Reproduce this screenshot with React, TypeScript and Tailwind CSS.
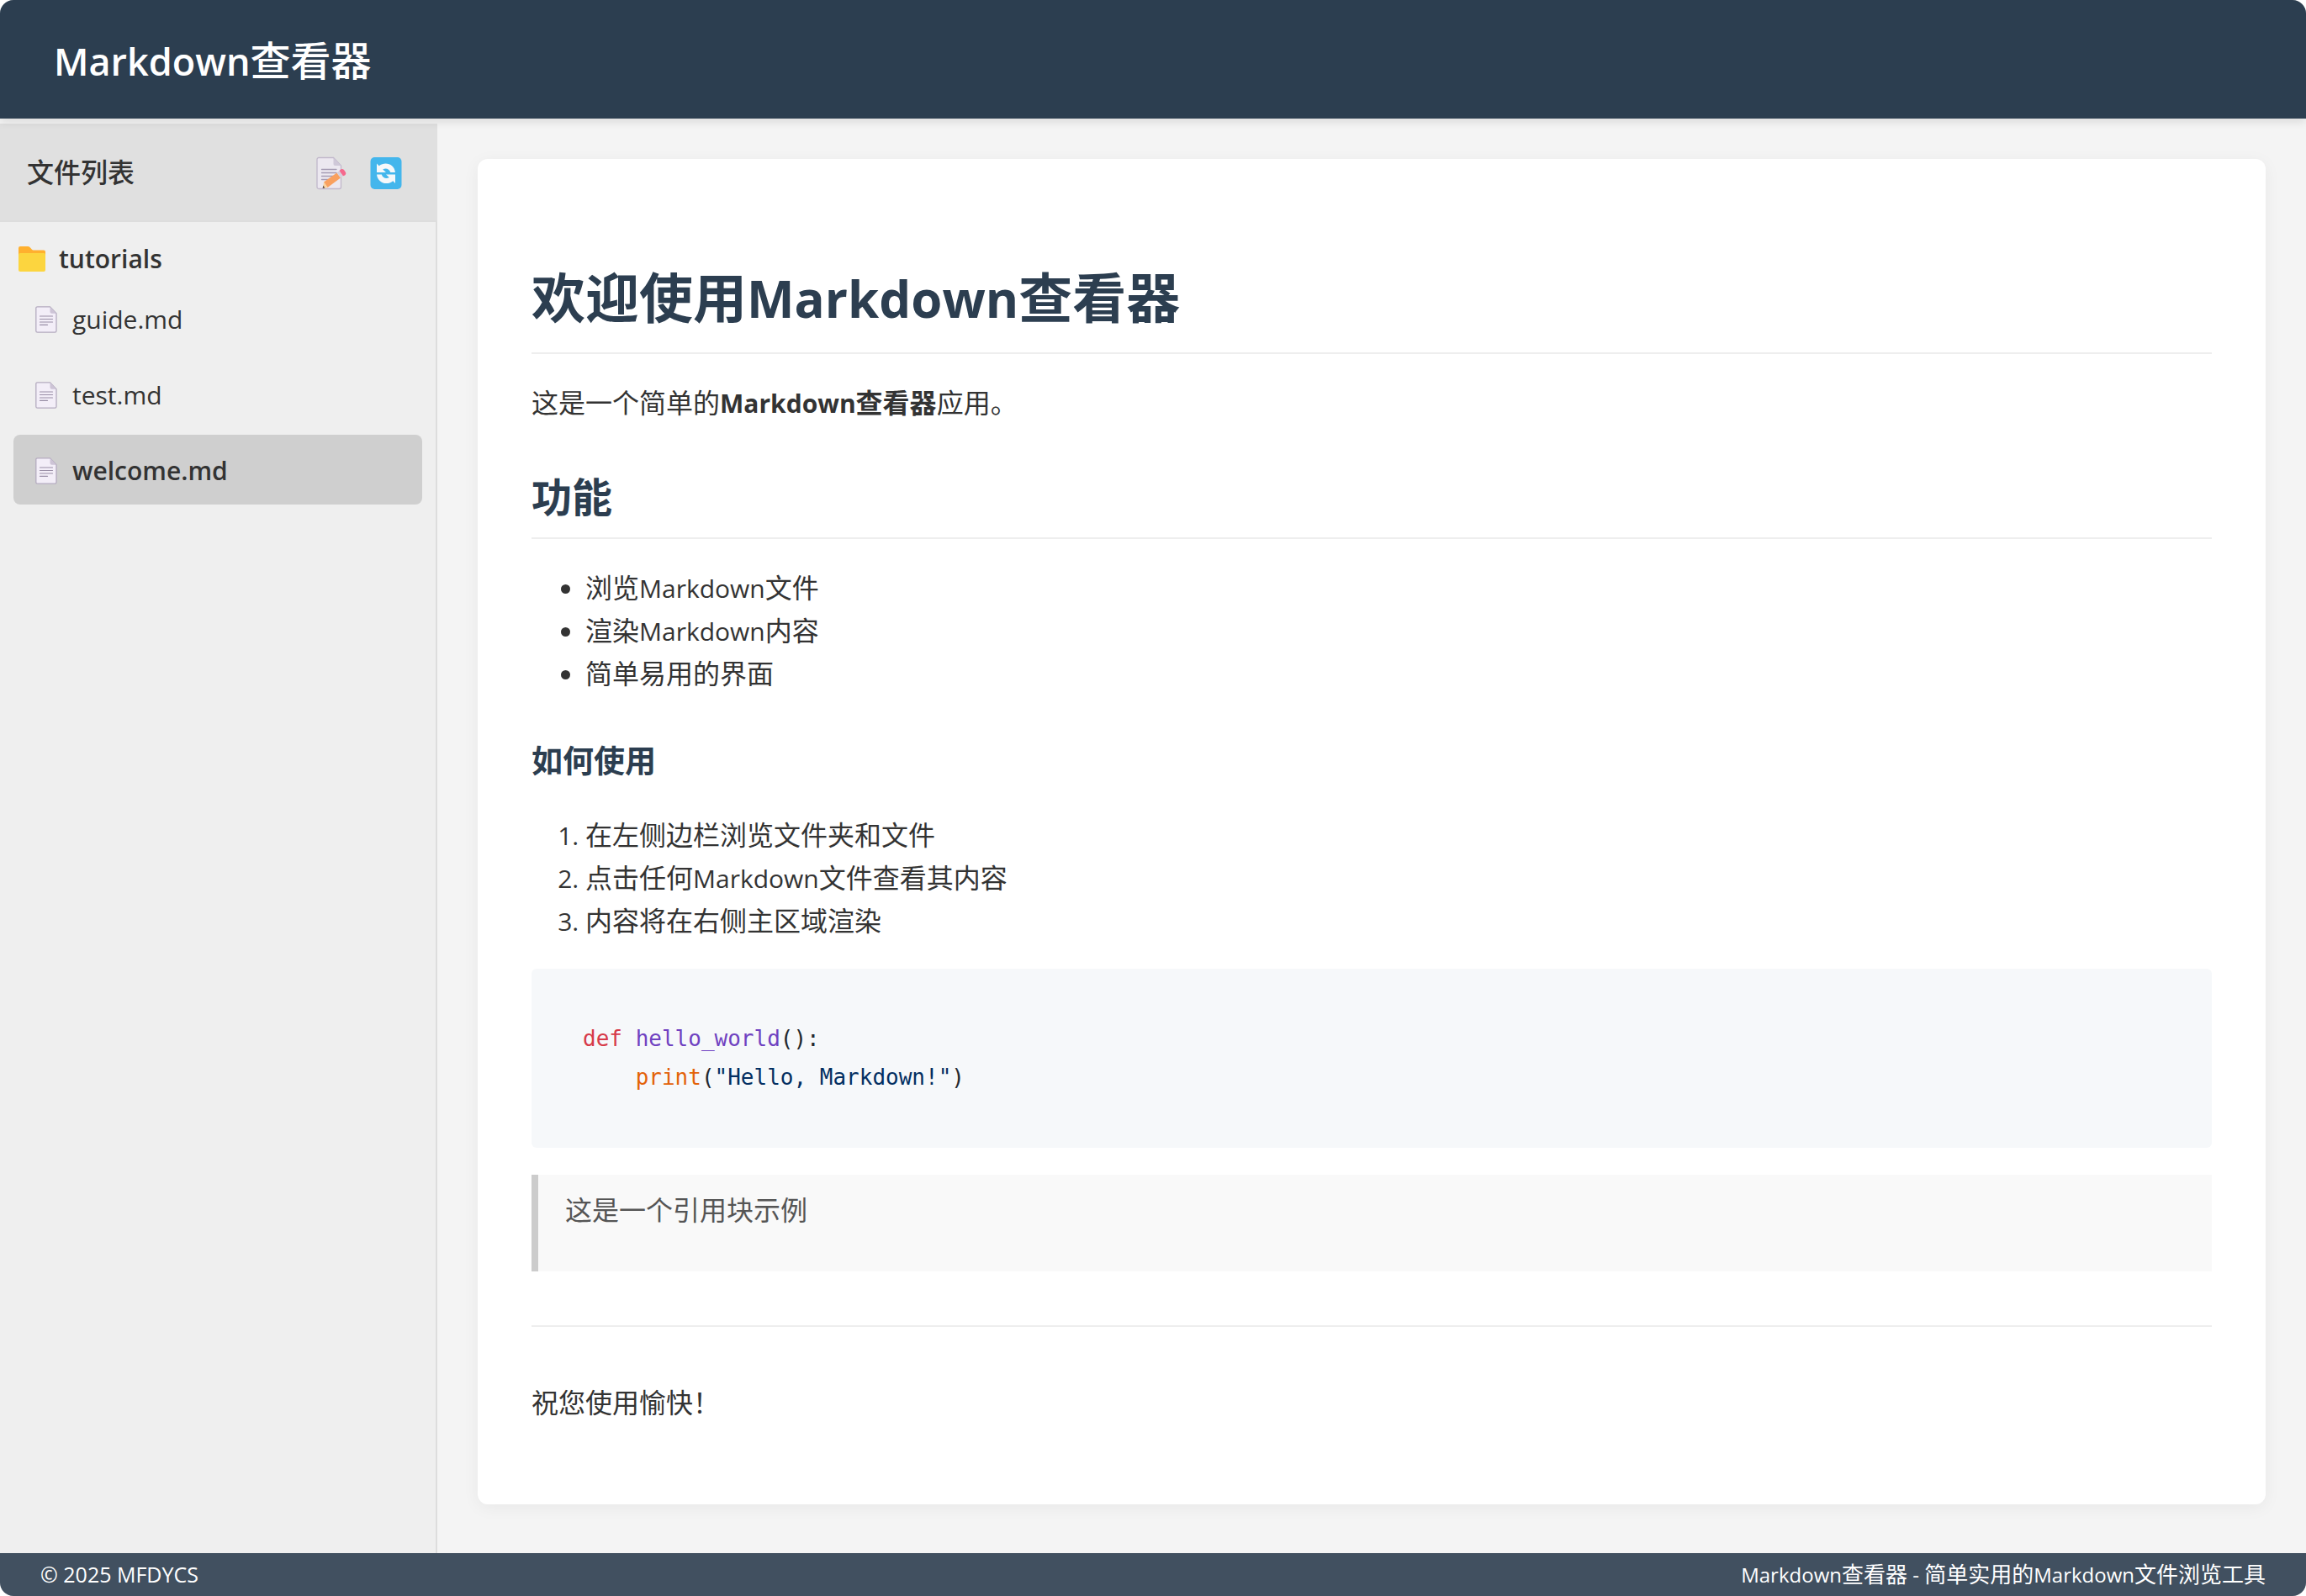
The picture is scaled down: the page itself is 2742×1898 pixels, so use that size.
import React from "react";

function MemoIcon() {
  return (
    <svg viewBox="0 0 36 40" className="h-10 w-9" aria-hidden="true">
      <path d="M3 1.5h17.5L29.5 11v25.5a2 2 0 0 1-2 2H3a2 2 0 0 1-2-2v-33a2 2 0 0 1 2-2z" fill="#ece8f0" stroke="#c1b8cb" strokeWidth="1.3" />
      <path d="M20.5 1.5v7.500a2 2 0 0 0 2 2h7z" fill="#cfc8d8" />
      <g stroke="#a59bb3" strokeWidth="1.3" strokeLinecap="round">
        <path d="M6.500 15.500h17.500M6.500 19.500h17.500M6.500 23.500h14M6.500 27.500h9" />
      </g>
      <path d="M24.500 19.500l4.500 6-15.500 11.500-4.500-6.500z" fill="#f9a05f" />
      <path d="M9 30.500l4.500 6.500-5.500.900z" fill="#fbd29a" />
      <path d="M8.400 34.500l1.900 3-2.700.400z" fill="#5b4b46" />
      <path d="M24.500 19.500l3-2.500 4.500 6.200-3 2.300z" fill="#d6d0dc" />
      <path d="M27.500 17l1.500-1.500c1.300-1 3-.700 4 .600l1.700 2.400c1 1.400.700 3-.600 3.900L32 23.200z" fill="#f5688c" />
    </svg>
  );
}

function RefreshIcon() {
  return (
    <svg viewBox="0 0 38 39" className="h-10 w-9.5" aria-hidden="true">
      <rect x=".5" y=".5" width="37" height="38" rx="5" fill="#44b6ec" />
      <path d="M8 8v10.500h11l-3.800-3.600c3.800-2 7.800-.500 9 3.600h5.800C29 8.500 18 4.800 10.700 10.800z" fill="#f6f8fa" />
      <path d="M30 31.500V21H19l3.800 3.600c-3.800 2-7.800.500-9-3.600H8c1 10 12 13.700 19.300 7.700z" fill="#f6f8fa" />
    </svg>
  );
}

function FolderIcon() {
  return (
    <svg viewBox="0 0 32 30" className="h-8 w-8" aria-hidden="true">
      <path d="M2 0h9c1 0 1.800.3 2.500 1l2.500 2.700c.4.4.9.7 1.500.7H30a2 2 0 0 1 2 2V14H0V2a2 2 0 0 1 2-2z" fill="#ffb02e" />
      <path d="M0 10a2 2 0 0 1 2-2h28a2 2 0 0 1 2 2v18a2 2 0 0 1-2 2H2a2 2 0 0 1-2-2z" fill="#fcd53f" />
    </svg>
  );
}

function FileIcon() {
  return (
    <svg viewBox="0 0 26 32" className="h-8 w-6.5" aria-hidden="true">
      <path d="M2.500.8h15l7.500 8v20.700a1.700 1.700 0 0 1-1.700 1.700H2.500a1.700 1.700 0 0 1-1.700-1.700v-27A1.700 1.700 0 0 1 2.500.8z" fill="#f3eef8" stroke="#b4abbf" strokeWidth="1.3" />
      <path d="M17.500.8v6a2 2 0 0 0 2 2h5.500z" fill="#cdc4d6" />
      <path d="M5.500 12h15M5.500 15.500h15M5.500 19h15M5.500 22.300h9" stroke="#998ea6" strokeWidth="1.2" strokeLinecap="round" />
    </svg>
  );
}

const files = [
  { name: "guide.md", active: false },
  { name: "test.md", active: false },
  { name: "welcome.md", active: true },
];

function Sidebar() {
  return (
    <aside className="mt-1.5 flex w-[520px] shrink-0 flex-col border-r-2 border-[#dddddd] bg-[#efefef]">
      <div className="-mr-0.5 flex items-center justify-between border-b-2 border-[#dddddd] bg-[#e0e0e0] px-8 py-8">
        <h2 className="leading-[51px] font-medium">文件列表</h2>
        <div className="flex items-center gap-7 pt-0.5 pr-2.5">
          <button type="button" aria-label="编辑">
            <MemoIcon />
          </button>
          <button type="button" aria-label="刷新">
            <RefreshIcon />
          </button>
        </div>
      </div>
      <nav className="flex flex-col px-4 pt-[18px] text-[30px]">
        <button type="button" className="flex items-center gap-4 pl-1.5 text-left leading-[51px] font-semibold">
          <FolderIcon />
          <span>tutorials</span>
        </button>
        <ul className="flex flex-col gap-[7px] pt-1">
          {files.map((f) => (
            <li key={f.name}>
              <a
                href={"#" + f.name}
                className={
                  f.active
                    ? "flex items-center gap-[18px] rounded-lg bg-[#cfcfcf] px-[26px] pt-[17px] pb-[15px] leading-[51px] font-semibold"
                    : "flex items-center gap-[18px] rounded-lg px-[26px] pt-[17px] pb-[15px] leading-[51px]"
                }
              >
                <FileIcon />
                <span>{f.name}</span>
              </a>
            </li>
          ))}
        </ul>
      </nav>
    </aside>
  );
}

function Article() {
  return (
    <article className="rounded-xl bg-white px-16 pt-[114px] pb-24 shadow-[0_4px_20px_rgba(0,0,0,0.05)]">
      <h1 className="border-b-2 border-[#eeeeee] pb-3.5 text-[64px] leading-[102px] font-bold text-[#2c3e50]">
        欢迎使用<span className="text-[60px] leading-none">Markdown</span>查看器
      </h1>
      <p className="mt-8">
        这是一个简单的
        <strong className="font-bold">
          <span className="text-[30px] leading-none">Markdown</span>查看器
        </strong>
        应用。
      </p>
      <h2 className="mt-12 border-b-2 border-[#eeeeee] pb-2.5 text-5xl leading-[77px] font-bold text-[#2c3e50]">功能</h2>
      <ul className="mt-8 list-disc pl-16">
        <li>
          浏览<span className="text-[30px] leading-none">Markdown</span>文件
        </li>
        <li>
          渲染<span className="text-[30px] leading-none">Markdown</span>内容
        </li>
        <li>简单易用的界面</li>
      </ul>
      <h3 className="mt-12 text-[37px] leading-[61px] font-bold text-[#2c3e50]">如何使用</h3>
      <ol className="mt-8 list-decimal pl-16 marker:text-[30px]">
        <li>在左侧边栏浏览文件夹和文件</li>
        <li>
          点击任何<span className="text-[30px] leading-none">Markdown</span>文件查看其内容
        </li>
        <li>内容将在右侧主区域渲染</li>
      </ol>
      <pre className="mt-8 rounded-md bg-[#f6f8fa] px-[61px] pt-[60px] pb-[61px] font-['DejaVu_Sans_Mono',monospace] text-[26px] leading-[46px] text-[#24292e]">
        <code className="font-['DejaVu_Sans_Mono',monospace]">
          <span className="text-[#d73a49]">def</span> <span className="text-[#6f42c1]">hello_world</span>():{"\n"}
          {"    "}
          <span className="text-[#e36209]">print</span>(<span className="text-[#032f62]">"Hello, Markdown!"</span>)
        </code>
      </pre>
      <blockquote className="mt-8 border-l-8 border-[#cccccc] bg-[#f9f9f9] px-8 pt-4 pb-12 text-[#555555]">
        <p>这是一个引用块示例</p>
      </blockquote>
      <hr className="my-16 border-t-2 border-[#eeeeee]" />
      <p>祝您使用愉快！</p>
    </article>
  );
}

export default function App() {
  return (
    <div className="flex min-h-screen flex-col overflow-hidden rounded-2xl bg-[#f4f4f4] font-['Open_Sans','Noto_Sans_CJK_SC',sans-serif] text-[32px] leading-[51px] text-[#333333]">
      <header className="relative z-10 bg-[#2c3e50] px-16 pt-[33px] pb-[31px] shadow-[0_4px_10px_rgba(0,0,0,0.1)]">
        <h1 className="text-5xl leading-[77px] font-medium text-white">
          <span className="text-[45px] leading-none font-semibold">Markdown</span>查看器
        </h1>
      </header>
      <div className="flex flex-1">
        <Sidebar />
        <main className="min-w-0 flex-1 px-12 pt-12 pb-14">
          <Article />
        </main>
      </div>
      <footer className="flex items-center justify-between bg-[#415060] px-12 text-white">
        <p className="text-[25px]">© 2025 MFDYCS</p>
        <p className="text-[26px]">
          <span className="text-2xl leading-none">Markdown</span>查看器
          <span className="text-2xl leading-none"> - </span>简单实用的
          <span className="text-2xl leading-none">Markdown</span>文件浏览工具
        </p>
      </footer>
    </div>
  );
}
